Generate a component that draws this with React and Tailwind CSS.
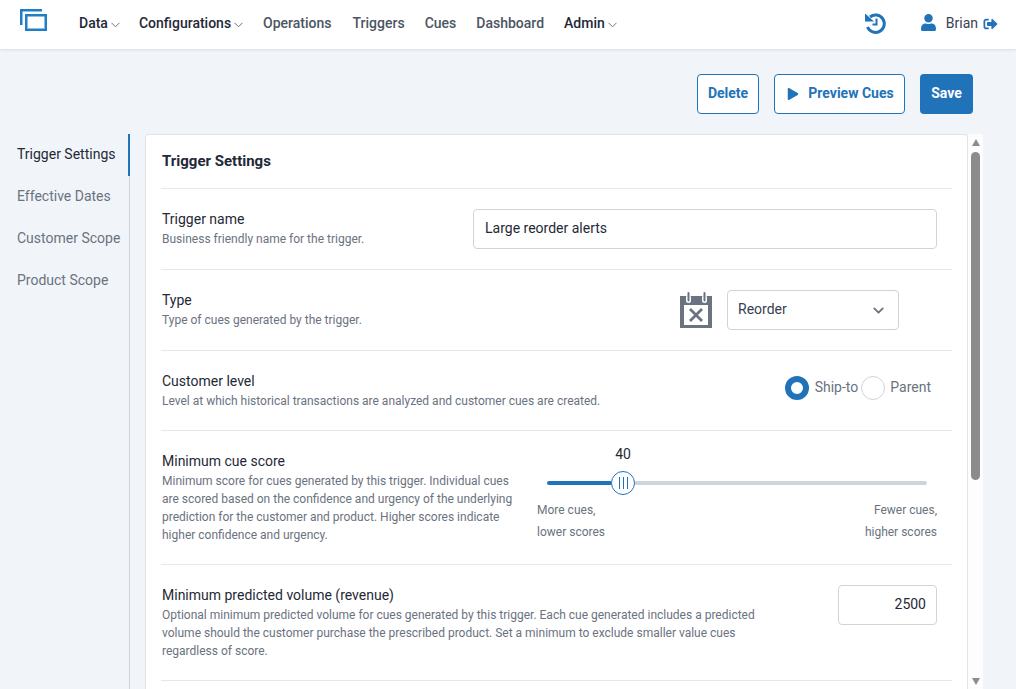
import React from "react";
import { FaUser, FaSignOutAlt, FaPlay } from "react-icons/fa";
import { LuChevronDown } from "react-icons/lu";

const NavItem = ({ label, strong, caret, className = "" }) => (
  <div className={`flex items-center text-[14px] font-medium ${strong ? "text-[#1f2937]" : "text-[#4b5563]"} ${className}`}>
    <span>{label}</span>
    {caret && (
      <svg width="9" height="6" viewBox="0 0 9 6" fill="none" stroke="#6b7280" strokeWidth="1" className="ml-[3px] -mr-[1px] mt-[2px]">
        <path d="M0.5 0.8 L4.5 4.8 L8.5 0.8" />
      </svg>
    )}
  </div>
);

const Logo = () => (
  <svg width="27" height="22" viewBox="0 0 27 22" fill="none" stroke="#1f7fc4" strokeWidth="2.5" className="block">
    <path d="M1.25 16 V1.25 H22" />
    <rect x="6.25" y="6.25" width="19.5" height="14.5" />
  </svg>
);

const HistoryIcon = () => (
  <svg width="23" height="23" viewBox="0 0 23 23" fill="none" className="mr-[34px]">
    <path d="M3.5 15 A8.7 8.7 0 1 0 6 5" stroke="#2173b9" strokeWidth="3" />
    <path d="M1 1.5 L10 9.5 L1 9.5 Z" fill="#2173b9" />
    <path d="M12.5 6.5 V12.5 H8.5" stroke="#2173b9" strokeWidth="2" />
  </svg>
);

const CalendarX = () => (
  <svg width="32" height="36" viewBox="0 0 32 36" className="mr-[15px] block">
    <path d="M0 4 H32 V36 H0 Z" fill="#6b7280" />
    <rect x="6" y="3" width="5" height="8" rx="2.5" fill="#ffffff" />
    <rect x="22" y="3" width="5" height="8" rx="2.5" fill="#ffffff" />
    <rect x="7.5" y="0" width="2" height="9.5" rx="1" fill="#6b7280" />
    <rect x="23.5" y="0" width="2" height="9.5" rx="1" fill="#6b7280" />
    <rect x="4" y="13" width="24" height="20" fill="#ffffff" />
    <path d="M10 17 L22 29 M22 17 L10 29" stroke="#6b7280" strokeWidth="2.8" />
  </svg>
);

const Row = ({ title, desc, descWidth, children, className = "" }) => (
  <div className={`flex justify-between border-b border-[#e5e7eb] pr-[15px] ${className}`}>
    <div className={`ml-[1px] ${descWidth || ""}`}>
      <div className="text-[14px] leading-[20px] text-[#1f2937]">{title}</div>
      <div className="mt-[1px] text-[12px] leading-[18px] text-[#6b7280]">{desc}</div>
    </div>
    {children}
  </div>
);

export default function App() {
  return (
    <div className="h-screen flex flex-col overflow-hidden bg-[#f1f5f9] font-['Roboto',sans-serif]">
      {/* Top nav */}
      <header className="h-[49px] shrink-0 bg-white shadow-[0_1px_3px_rgba(0,0,0,0.1)] flex items-center pl-[20px] pr-[18px] pb-[2px] z-10">
        <div className="w-[59px] -mt-[7px]">
          <Logo />
        </div>
        <div className="flex items-center gap-[20px]">
          <NavItem label="Data" strong caret />
          <NavItem label="Configurations" strong caret />
          <NavItem label="Operations" className="ml-[1px]" />
          <NavItem label="Triggers" className="ml-[1px]" />
          <NavItem label="Cues" />
          <NavItem label="Dashboard" />
          <NavItem label="Admin" strong caret />
        </div>
        <div className="ml-auto flex items-center">
          <HistoryIcon />
          <FaUser className="w-[15px] h-[17px] text-[#2173b9] mr-[10px] -mt-[2px]" />
          <span className="text-[14px] text-[#374151] mr-[5px]">Brian</span>
          <FaSignOutAlt className="w-[15px] h-[14px] text-[#2173b9]" />
        </div>
      </header>

      {/* Actions */}
      <div className="shrink-0 flex justify-end gap-[15px] pt-[25px] pb-[20px] pr-[43px]">
        <button className="h-[40px] w-[62px] pb-[2px] rounded-[4px] border border-[#2173b9] bg-white text-[14px] font-bold text-[#2173b9]">
          Delete
        </button>
        <button className="h-[40px] w-[131px] pb-[2px] pl-[2px] rounded-[4px] border border-[#2173b9] bg-white text-[14px] font-bold text-[#2173b9] flex items-center justify-center gap-[7px]">
          <FaPlay className="w-[12px] h-[12px] mr-[2px] mt-[2px]" />
          Preview Cues
        </button>
        <button className="h-[40px] w-[53px] pb-[2px] rounded-[4px] bg-[#2173b9] text-[14px] font-bold text-white">
          Save
        </button>
      </div>

      <div className="flex flex-1 min-h-0">
        {/* Section nav */}
        <nav className="w-[130px] shrink-0 border-r border-[#cbd5e1] text-[14px]">
          <div className="h-[42px] pb-[2px] flex items-center pl-[17px] text-[#1f2937] border-r-2 border-[#2173b9] -mr-[1px]">
            Trigger Settings
          </div>
          <div className="h-[42px] pb-[2px] flex items-center pl-[17px] text-[#6b7280]">Effective Dates</div>
          <div className="h-[42px] pb-[2px] flex items-center pl-[17px] text-[#6b7280]">Customer Scope</div>
          <div className="h-[42px] pb-[2px] flex items-center pl-[17px] text-[#6b7280]">Product Scope</div>
        </nav>

        {/* Card */}
        <div className="ml-[15px] w-[823px] shrink-0 overflow-hidden rounded-t-[4px] border border-b-0 border-[#dfe4ea] bg-white px-[15px]">
          <div className="h-[54px] border-b border-[#e5e7eb] pl-[1px] pt-[16px] text-[15px] leading-[20px] font-bold text-[#1f2937]">
            Trigger Settings
          </div>
          <Row
            title="Trigger name"
            desc="Business friendly name for the trigger."
            className="h-[81px] pt-[20px]"
          >
            <input
              readOnly
              value="Large reorder alerts"
              className="w-[464px] h-[40px] pb-[2px] rounded-[4px] border border-[#cfd4dc] px-[11px] text-[14px] text-[#1f2937] outline-none"
            />
          </Row>
          <Row
            title="Type"
            desc="Type of cues generated by the trigger."
            className="h-[81px] pt-[20px]"
          >
            <div className="flex items-start mr-[38px]">
              <div className="pt-[2px]">
                <CalendarX />
              </div>
              <div className="w-[172px] h-[40px] rounded-[4px] border border-[#cfd4dc] flex items-center justify-between pl-[10px] pr-[11px] text-[14px] text-[#374151]">
                <span className="-mt-[2px]">Reorder</span>
                <LuChevronDown className="w-[17px] h-[17px] mt-[1px] text-[#6b7280]" strokeWidth={2.5} />
              </div>
            </div>
          </Row>
          <Row
            title="Customer level"
            desc="Level at which historical transactions are analyzed and customer cues are created."
            className="h-[80px] pt-[20px]"
          >
            <div className="flex items-center h-[34px] mr-[6px] text-[14px] text-[#6b7280]">
              <span className="w-[24px] h-[24px] rounded-full border-[6px] border-[#2173b9] bg-white mr-[6px]" />
              <span className="mr-[3px] -mt-[2px]">Ship-to</span>
              <span className="w-[24px] h-[24px] rounded-full border border-[#cfd4dc] bg-white mr-[5px]" />
              <span className="-mt-[2px]">Parent</span>
            </div>
          </Row>
          <Row
            title="Minimum cue score"
            desc="Minimum score for cues generated by this trigger. Individual cues are scored based on the confidence and urgency of the underlying prediction for the customer and product. Higher scores indicate higher confidence and urgency."
            descWidth="w-[352px]"
            className="h-[134px] pt-[20px]"
          >
            <div className="w-[400px] -mt-[7px] text-[12px] text-[#6b7280]">
              <div className="text-center text-[14px] leading-[20px] text-[#1f2937] w-[172px]">40</div>
              <div className="flex items-center px-[10px] h-[24px] mt-[7px]">
                <div className="w-[64px] h-[4px] rounded-l-full bg-[#2173b9]" />
                <div className="w-[24px] h-[24px] shrink-0 rounded-full border border-[#2173b9] bg-white flex items-center justify-center gap-[3px]">
                  <span className="w-[1px] h-[12px] bg-[#2173b9]" />
                  <span className="w-[1px] h-[12px] bg-[#2173b9]" />
                  <span className="w-[1px] h-[12px] bg-[#2173b9]" />
                </div>
                <div className="flex-1 h-[4px] rounded-r-full bg-[#cfd4dc]" />
              </div>
              <div className="flex justify-between mt-[4px] leading-[22px]">
                <div>
                  More cues,
                  <br />
                  lower scores
                </div>
                <div className="text-right">
                  Fewer cues,
                  <br />
                  higher scores
                </div>
              </div>
            </div>
          </Row>
          <Row
            title="Minimum predicted volume (revenue)"
            desc="Optional minimum predicted volume for cues generated by this trigger. Each cue generated includes a predicted volume should the customer purchase the prescribed product. Set a minimum to exclude smaller value cues regardless of score."
            descWidth="w-[610px]"
            className="h-[116px] pt-[20px]"
          >
            <input
              readOnly
              value="2500"
              className="w-[99px] h-[40px] pb-[2px] rounded-[4px] border border-[#cfd4dc] pl-[11px] pr-[10px] text-right text-[14px] text-[#1f2937] outline-none"
            />
          </Row>
        </div>

        {/* Scrollbar */}
        <div className="w-[15px] shrink-0 bg-[#fdfdfd] flex flex-col items-center pt-[5px] pb-[4px]">
          <div className="w-0 h-0 border-x-[4.5px] border-x-transparent border-b-[7px] border-b-[#8c8c8c]" />
          <div className="w-[9px] h-[328px] mt-[6px] rounded-full bg-[#8c8c8c]" />
          <div className="mt-auto w-0 h-0 border-x-[4.5px] border-x-transparent border-t-[7px] border-t-[#8c8c8c]" />
        </div>
      </div>
    </div>
  );
}
